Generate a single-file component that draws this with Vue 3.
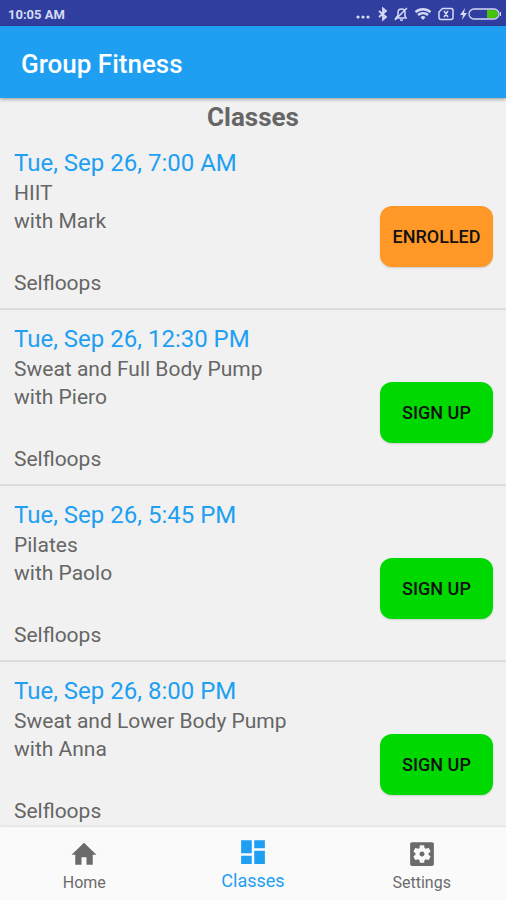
<script setup>
import { ref } from 'vue'

const classes = ref([
  { id: 1, time: 'Tue, Sep 26, 7:00 AM', name: 'HIIT', coach: 'Mark', place: 'Selfloops', enrolled: true },
  { id: 2, time: 'Tue, Sep 26, 12:30 PM', name: 'Sweat and Full Body Pump', coach: 'Piero', place: 'Selfloops', enrolled: false },
  { id: 3, time: 'Tue, Sep 26, 5:45 PM', name: 'Pilates', coach: 'Paolo', place: 'Selfloops', enrolled: false },
  { id: 4, time: 'Tue, Sep 26, 8:00 PM', name: 'Sweat and Lower Body Pump', coach: 'Anna', place: 'Selfloops', enrolled: false },
])

const tabs = [
  { label: 'Home', path: 'M10 20.500v-6h4v6h5v-8h3L12 3 2 12.500h3v8z' },
  { label: 'Classes', path: 'M2.500 13h8.500V2.500H2.500V13zm0 8.500h8.500V15H2.500v6.500zm10.500 0h8.500V11H13v10.500zM13 2.500V9h8.500V2.500H13z' },
  { label: 'Settings', path: 'M12 10c-1.1 0-2 .9-2 2s.9 2 2 2 2-.9 2-2-.9-2-2-2zm8-7.500H4c-.9 0-1.500.6-1.500 1.500v16c0 .9.6 1.500 1.500 1.500h16c.9 0 1.500-.6 1.500-1.500V4c0-.9-.6-1.500-1.500-1.500zM17.250 12c0 .23-.02.46-.05.68l1.48 1.16c.13.11.17.3.08.45l-1.4 2.42c-.09.15-.27.21-.43.15l-1.74-.7c-.36.28-.76.51-1.18.69l-.26 1.85c-.03.17-.18.3-.35.3h-2.8c-.17 0-.32-.13-.35-.29l-.26-1.85c-.43-.18-.82-.41-1.18-.69l-1.74.7c-.16.06-.34 0-.43-.15l-1.4-2.42c-.09-.15-.05-.34.08-.45l1.48-1.16c-.03-.23-.05-.46-.05-.69 0-.23.02-.46.05-.68l-1.48-1.16c-.13-.11-.17-.3-.08-.45l1.4-2.42c.09-.15.27-.21.43-.15l1.74.7c.36-.28.76-.51 1.18-.69l.26-1.85c.03-.17.18-.3.35-.3h2.8c.17 0 .32.13.35.29l.26 1.85c.43.18.82.41 1.18.69l1.74-.7c.16-.06.34 0 .43.15l1.4 2.42c.09.15.05.34-.08.45l-1.48 1.16c.03.23.05.46.05.69z' },
]
const active = ref('Classes')
</script>

<template>
  <div class="screen">
    <div class="status">
      <span>10:05 AM</span>
      <div class="indicators">
        <svg width="16" height="16" viewBox="0 0 16 16" fill="currentColor">
          <circle cx="2" cy="11" r="1.6" /><circle cx="7" cy="11" r="1.6" /><circle cx="12" cy="11" r="1.6" />
        </svg>
        <svg width="10" height="16" viewBox="0 0 10 16" fill="none" stroke="currentColor" stroke-width="1.8">
          <path d="M1 5l7 6-3 2.500V2.500l3 2.500-7 6" />
        </svg>
        <svg width="14" height="16" viewBox="0 0 14 16" fill="none" stroke="currentColor" stroke-width="1.5">
          <path d="M2 12h10l-1-2V6.500C11 4 9.500 3 7.500 3S4 4 4 6.500V9.500L2 12zM6 14h3M1 14L13 2" />
        </svg>
        <svg width="18" height="16" viewBox="0 0 18 16" fill="currentColor">
          <path d="M9 14L6.500 11.200a3.800 3.800 0 0 1 5 0z" />
          <path d="M1.500 6.200a11 11 0 0 1 15 0M4 9a7.500 7.500 0 0 1 10 0" fill="none" stroke="currentColor" stroke-width="2.4" />
        </svg>
        <svg width="16" height="16" viewBox="0 0 16 16" fill="none" stroke="currentColor" stroke-width="1.5">
          <path d="M4.500 2.500H13a2 2 0 0 1 2 2v7a2 2 0 0 1-2 2H3a2 2 0 0 1-2-2V6zM6 5l4 6M10 5l-4 6" />
        </svg>
        <svg class="charge" width="42" height="16" viewBox="0 0 42 16">
          <path d="M5 2L0 9h3l-1 5 5-7H4z" fill="currentColor" />
          <path d="M27 4h7a4 4 0 0 1 0 8h-7z" fill="#45c40a" />
          <rect x="9" y="3" width="30" height="10" rx="5" fill="none" stroke="currentColor" stroke-width="1.3" />
          <path d="M40.500 6v4" stroke="currentColor" />
        </svg>
      </div>
    </div>
    <header class="appbar"><h1>Group Fitness</h1></header>
    <main class="content">
      <h2>Classes</h2>
      <ul class="list">
        <li v-for="c in classes" :key="c.id" class="item">
          <div class="info">
            <h3>{{ c.time }}</h3>
            <p>{{ c.name }}</p>
            <p>with {{ c.coach }}</p>
            <p class="place">{{ c.place }}</p>
          </div>
          <button type="button" class="action" :class="{ enrolled: c.enrolled }" @click="c.enrolled = !c.enrolled">
            {{ c.enrolled ? 'ENROLLED' : 'SIGN UP' }}
          </button>
        </li>
      </ul>
    </main>
    <nav class="tabs">
      <button v-for="t in tabs" :key="t.label" type="button" class="tab" :class="{ active: active === t.label }" @click="active = t.label">
        <svg width="30" height="30" viewBox="0 0 24 24" fill="currentColor" fill-rule="evenodd"><path :d="t.path" /></svg>
        <span>{{ t.label }}</span>
      </button>
    </nav>
  </div>
</template>

<style>
body {
  background: #f1f1f1;
}
</style>

<style scoped>
.screen {
  display: flex;
  flex-direction: column;
  height: 100vh;
  background: #f1f1f1;
  color: #666;
  font-family: Roboto, "Liberation Sans", sans-serif;
}
h1, h2, h3, p, ul {
  margin: 0;
  padding: 0;
}
.status {
  display: flex;
  flex: none;
  align-items: center;
  justify-content: space-between;
  height: 26px;
  padding: 2px 4px 0 8px;
  box-sizing: border-box;
  background: #303f9f;
  color: #d5daf5;
  font-size: 13px;
  font-weight: 700;
}
.indicators {
  display: flex;
  align-items: center;
  gap: 6px;
}
.appbar {
  display: flex;
  flex: none;
  align-items: center;
  height: 72px;
  padding: 4px 21px 0;
  box-sizing: border-box;
  z-index: 1;
  background: #1e9ff2;
  box-shadow: 0 1px 4px rgba(0, 0, 0, 0.4);
  color: #fff;
}
h1 {
  font-size: 26px;
  font-weight: 500;
}
.content {
  flex: 1;
  min-height: 0;
  overflow: hidden;
}
h2 {
  padding-top: 2px;
  font-size: 26px;
  font-weight: 700;
  line-height: 34px;
  text-align: center;
}
.list {
  list-style: none;
}
.item {
  display: flex;
  align-items: flex-start;
  justify-content: space-between;
  min-height: 176px;
  padding: 13px 13px 0 14px;
  box-sizing: border-box;
  border-bottom: 2px solid #dcdcdc;
}
h3 {
  color: #1e9ff2;
  font-size: 24px;
  font-weight: 400;
  line-height: 32px;
}
p {
  font-size: 21px;
  line-height: 28px;
}
.place {
  margin-top: 34px;
}
.action {
  width: 113px;
  height: 61px;
  margin-top: 59px;
  padding: 0;
  border: 0;
  border-radius: 12px;
  background: #00d900;
  box-shadow: 0 1px 2px rgba(0, 0, 0, 0.15);
  color: #111;
  font: 500 18px Roboto, "Liberation Sans", sans-serif;
}
.action.enrolled {
  background: #ff9827;
}
.tabs {
  display: flex;
  flex: none;
  height: 73px;
  background: #fafafa;
  box-shadow: 0 -1px 2px rgba(0, 0, 0, 0.08);
}
.tab {
  display: flex;
  flex: 1;
  flex-direction: column;
  align-items: center;
  gap: 2px;
  padding: 12px 0 0;
  border: 0;
  background: none;
  color: #6b6b6b;
  font: 400 16px/24px Roboto, "Liberation Sans", sans-serif;
}
.tab.active {
  gap: 0;
  padding-top: 10px;
  color: #1e9ff2;
  font-size: 18px;
  line-height: 28px;
}
</style>
